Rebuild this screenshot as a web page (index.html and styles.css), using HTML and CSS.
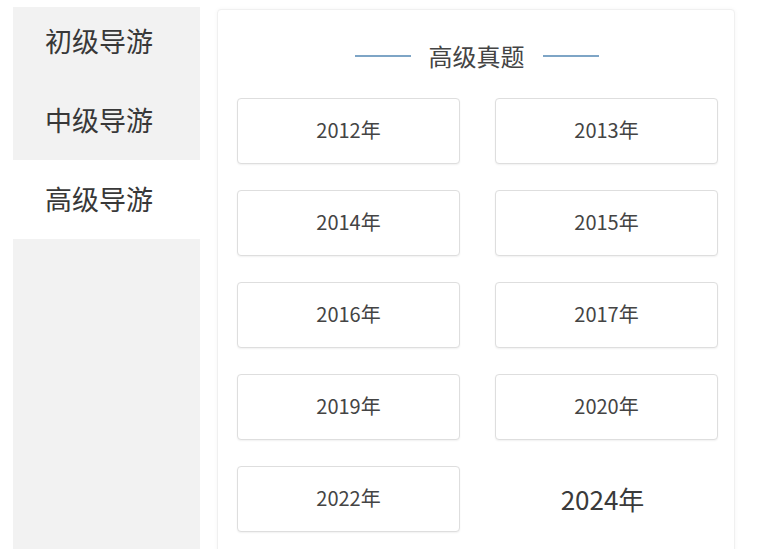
FILE: index.html
```html
<!DOCTYPE html>
<html lang="zh-CN">
<head>
<meta charset="utf-8">
<title>高级真题</title>
<link rel="stylesheet" href="styles.css">
</head>
<body>
<div class="page">
  <nav class="side">
    <div class="side-item first">初级导游</div>
    <div class="side-item">中级导游</div>
    <div class="side-item active">高级导游</div>
  </nav>
  <main class="card">
    <h2 class="title"><span class="rule"></span><span class="title-text">高级真题</span><span class="rule"></span></h2>
    <div class="years">
      <div class="year">2012年</div>
      <div class="year">2013年</div>
      <div class="year">2014年</div>
      <div class="year">2015年</div>
      <div class="year">2016年</div>
      <div class="year">2017年</div>
      <div class="year">2019年</div>
      <div class="year">2020年</div>
      <div class="year">2022年</div>
      <div class="year plain">2024年</div>
    </div>
  </main>
</div>
</body>
</html>
```
FILE: styles.css
```css
html, body {
  margin: 0;
  background: #fff;
  font-family: "Noto Sans CJK SC", "Noto Sans", sans-serif;
  color: #444;
}

.page {
  display: flex;
  align-items: flex-start;
  height: 549px;
  overflow: hidden;
}

.side {
  margin: 7px 0 0 13px;
  width: 187px;
  height: 560px;
  background: #f2f2f2;
  display: flex;
  flex-direction: column;
}

.side-item {
  height: 79px;
  box-sizing: border-box;
  display: flex;
  align-items: center;
  padding-left: 32px;
  padding-bottom: 3px;
  font-size: 27px;
  color: #383838;
}

.side-item.first {
  height: 74px;
  padding-bottom: 8px;
}

.side-item.active {
  background: #fff;
}

.card {
  margin: 9px 0 0 17px;
  width: 518px;
  height: 560px;
  box-sizing: border-box;
  background: #fff;
  border: 1px solid #f0f0f0;
  border-radius: 4px;
  box-shadow: 0 0 4px rgba(0, 0, 0, 0.04);
  padding: 30px 16px 0 19px;
}

.title {
  margin: 0 0 24px;
  height: 34px;
  box-sizing: border-box;
  display: flex;
  align-items: center;
  justify-content: center;
  gap: 18px;
  font-size: 24px;
  font-weight: normal;
  color: #444;
  padding: 0 2px 3px 0;
}

.rule {
  width: 56px;
  height: 2px;
  background: #7ea5c6;
}

.years {
  display: grid;
  grid-template-columns: 223px 223px;
  grid-auto-rows: 66px;
  column-gap: 35px;
  row-gap: 26px;
}

.year {
  display: flex;
  align-items: center;
  justify-content: center;
  box-sizing: border-box;
  padding-bottom: 3px;
  border: 1.5px solid #dedede;
  border-radius: 4px;
  box-shadow: 0 1px 2px rgba(0, 0, 0, 0.06);
  font-size: 20px;
  color: #444;
  background: #fff;
}

.year.plain {
  border-color: transparent;
  box-shadow: none;
  font-size: 26px;
  color: #3a3a3a;
  padding: 0 8px 2px 0;
}
```
